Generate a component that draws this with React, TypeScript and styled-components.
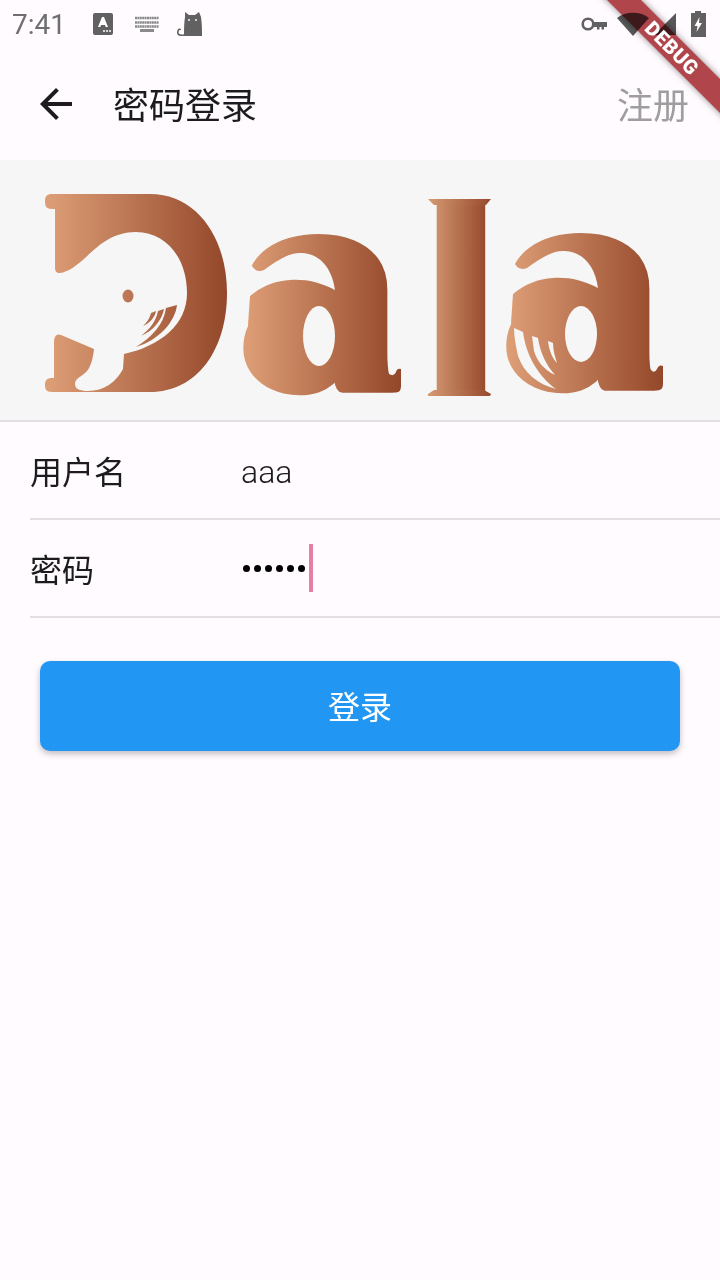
import { createGlobalStyle, styled } from "styled-components";

const GlobalStyle = createGlobalStyle`
  html, body {
    margin: 0;
    padding: 0;
    background: #fffbff;
  }
  body {
    font-family: "Noto Sans CJK SC", "Roboto", sans-serif;
  }
`;

const ICON = "#616161";
const BAND = "#f5f6f5";

const BACK_ARROW =
  "M20 11H7.83l5.59-5.59L12 4l-8 8 8 8 1.41-1.41L7.83 13H20v-2z";

// whale-shaped D, page coordinates (the svg viewBox starts at the band's top)
const WHALE_D =
  "M52 194 H150 C197 194 227 238 227 293 C227 350 197 392 150 392 H52 C46 392 45 389 45 385 C45 380 47 378 52 378 H54 V342 C54 336 57 333 61 335 L94 349 C93 358 91 368 85 373 C79 378 75 379 75 384 C75 389 80 391 88 391 C104 391 116 382 123 369 L124 354 C160 346 187 325 187 293 C187 258 166 232 136 232 C112 232 98 246 85 258 C76 266 68 272 60 273 C56 273 55 271 55 267 V209 H52 C46 209 45 206 45 201 C45 196 47 194 52 194 Z";
const GILLS = [
  "M166 308 L177 305 C175 322 159 340 136 347 C152 337 164 324 166 308 Z",
  "M158 311 L164 309 C162 320 153 331 141 336 C150 329 156 321 158 311 Z",
  "M151 313 L156 311 C155 317 150 323 143 326 C147 322 150 318 151 313 Z",
];
const A_STRIPES = [
  "M514 328 L523 332 C526 355 538 376 556 389 C537 384 524 373 518 356 C516 347 514 337 514 328 Z",
  "M532 336 L538 338 C540 352 546 365 555 375 C544 370 537 361 534 351 Z",
  "M548 341 L553 343 C553 350 555 357 557 363 C552 358 549 350 548 341 Z",
];
// tiny flared serifs of the l and the feet of the two a's
const L_SERIFS =
  "M428 199 H491 L486 205 H434 Z M434 390 H484 L491 394 Q491 396 489 396 H429 Q427 396 428 394 Z";
const FOOT_1 =
  "M342 392.5 H396 Q401 392.5 401 386 V369 Q397 368 396 372 Q394 377 389 374 L380 360 H340 L334 380 Q336 392.5 342 392.5 Z";
const FOOT_2 =
  "M605 390.5 H657 Q663 390.5 663 384 V366 Q659 364 657 369 Q655 373 652 371 L640 356 H603 L597 376 Q599 390.5 605 390.5 Z";
// fills the bowl up to the logo's heavier shape, then the crescent is cut back out
const A_BOWL = "M250 296 L262 275 H336 V372 H285 L248 325 Z";
const A_APERTURE =
  "M238 222 L322 222 L322 232 C300 232 275 240 254 253 Q248 258 252 266 Q256 273 264 270 C278 260 290 252 302 253 C320 254 332 268 335 290 C320 282 305 279 290 280 C275 281 262 286 250 296 L238 302 Z";

const Page = styled.div`
  position: relative;
  width: 720px;
  height: 1280px;
  overflow: hidden;
  background: #fffbff;
`;

const StatusBar = styled.div`
  height: 48px;
  padding: 0 14px 0 12px;
  display: flex;
  align-items: center;
  justify-content: space-between;
`;

const StatusGroup = styled.div`
  display: flex;
  align-items: center;
`;

const Time = styled.span`
  font-family: "Roboto", sans-serif;
  font-size: 28px;
  color: #6f6f6f;
  width: 81px;
`;

const StatusIcon = styled.svg<{ $gap?: number }>`
  display: block;
  margin-left: ${(p) => p.$gap ?? 0}px;
`;

const AppBar = styled.div`
  height: 112px;
  display: flex;
  align-items: center;
  padding-right: 31px;
`;

const BackButton = styled.div`
  width: 113px;
  padding-left: 32px;
  box-sizing: border-box;
  display: flex;
`;

const Title = styled.div`
  flex: 1;
  font-size: 36px;
  color: #1c1b1f;
  padding-bottom: 2px;
`;

const RegisterLink = styled.div`
  font-size: 36px;
  color: #9e9e9e;
  padding-bottom: 2px;
`;

const LogoBand = styled.div`
  height: 260px;
  background: ${BAND};
  border-bottom: 2px solid #e1dfe1;
`;

const LogoArt = styled.svg`
  display: block;
  width: 720px;
  height: 260px;
`;

const FormRow = styled.div`
  height: 96px;
  margin-left: 30px;
  border-bottom: 2px solid #e1dfe1;
  display: flex;
  align-items: center;
`;

const Label = styled.div`
  width: 211px;
  font-size: 32px;
  color: #1c1b1f;
`;

const Value = styled.div`
  font-family: "Roboto", sans-serif;
  font-weight: 300;
  font-size: 32px;
  color: #1c1b1f;
  padding-top: 4px;
`;

const Dots = styled.div`
  display: flex;
  gap: 4px;
  margin-left: 2px;
`;

const Dot = styled.span`
  width: 7px;
  height: 7px;
  border-radius: 50%;
  background: #000;
`;

const Caret = styled.span`
  width: 4px;
  height: 48px;
  margin-left: 4px;
  background: #e87ea5;
`;

const LoginButton = styled.button`
  display: block;
  width: 640px;
  height: 90px;
  margin: 43px 40px 0;
  padding-bottom: 4px;
  border: none;
  border-radius: 10px;
  background: #2196f3;
  color: #fff;
  font-family: inherit;
  font-size: 32px;
  box-shadow: 0 3px 6px rgba(0, 0, 0, 0.25);
`;

const DebugRibbon = styled.div`
  position: absolute;
  left: 572px;
  top: 36px;
  width: 200px;
  height: 24px;
  transform: rotate(45deg);
  background: #b0474c;
  box-shadow: 0 0 7px rgba(0, 0, 0, 0.45);
  mix-blend-mode: multiply;
`;

const DebugLabel = styled.div`
  position: absolute;
  left: 572px;
  top: 36px;
  width: 200px;
  height: 24px;
  line-height: 24px;
  transform: rotate(45deg);
  color: #fff;
  font-family: "Roboto", sans-serif;
  font-weight: 900;
  font-size: 20px;
  letter-spacing: 0.5px;
  text-align: center;
`;

const LogoLetter = styled.text<{ $family: string; $weight: number }>`
  font-family: ${(p) => p.$family}, sans-serif;
  font-weight: ${(p) => p.$weight};
  stroke-linejoin: round;
`;

const HEAVY = '"Roboto"';
const SANS = '"Liberation Sans"';

export default function App() {
  return (
    <Page>
      <GlobalStyle />
      <StatusBar>
        <StatusGroup>
          <Time>7:41</Time>
          <StatusIcon width="20" height="22" viewBox="0 0 20 22">
            <rect width="20" height="22" rx="2" fill={ICON} />
            <path d="M5 14 L9 4 H11 L15 14 H12.7 L12 12 H8 L7.3 14 Z" fill="#fff" />
            <circle cx="11" cy="18" r="1" fill="#fff" />
            <circle cx="14" cy="18" r="1" fill="#fff" />
            <circle cx="17" cy="18" r="1" fill="#fff" />
          </StatusIcon>
          <StatusIcon $gap={22} width="24" height="16" viewBox="0 0 24 16" stroke="#8a8a8a" strokeWidth="3" fill="none">
            <path d="M0 2 H24" strokeDasharray="2 .4" strokeWidth="2.6" />
            <path d="M0 6.5 H24" strokeDasharray="2 .4" strokeWidth="2.6" />
            <path d="M0 10.5 H24" strokeDasharray="2 .4" strokeWidth="2.6" />
            <path d="M5 14.5 H19" />
          </StatusIcon>
          <StatusIcon $gap={18} width="25" height="24" viewBox="0 0 25 24">
            <path
              d="M8 5 L8 0 L12 3 H18 L22 0 L24 5 C25 12 25 18 25 24 H7 C7 18 7 11 8 5 Z"
              fill={ICON}
            />
            <path
              d="M7 23 C2 24 0 22 1 19 C1.5 17 3 17 3.5 18"
              fill="none"
              stroke={ICON}
              strokeWidth="1.6"
            />
            <circle cx="12" cy="8" r="0.9" fill="#fff" />
            <circle cx="19" cy="8" r="0.9" fill="#fff" />
          </StatusIcon>
        </StatusGroup>
        <StatusGroup>
          <StatusIcon width="26" height="14" viewBox="0 0 26 14">
            <circle cx="7" cy="7" r="5.3" fill="none" stroke={ICON} strokeWidth="2.6" />
            <path d="M12 5 H26 V10 H23 V12.5 H20.5 V10 H18.5 V12.5 H16 V10 H12 Z" fill={ICON} />
          </StatusIcon>
          <StatusIcon $gap={10} width="32" height="24" viewBox="0 0 32 24">
            <path d="M0 6 C8 -1 24 -1 32 6 L16 24 Z" fill="#585858" />
          </StatusIcon>
          <StatusIcon $gap={3} width="24" height="24" viewBox="0 0 24 24">
            <path d="M24 1 V23 H2 Z" fill="#585858" />
          </StatusIcon>
          <StatusIcon $gap={15} width="15" height="26" viewBox="0 0 15 26">
            <path
              d="M4 0 H10 V2 H15 V26 H0 V2 H4 Z M8.5 6 L3.5 15 H6.5 L5.5 21 L11 12 H8 Z"
              fill={ICON}
              fillRule="evenodd"
            />
          </StatusIcon>
        </StatusGroup>
      </StatusBar>
      <AppBar>
        <BackButton>
          <svg width="48" height="48" viewBox="0 0 24 24" fill="#1c1b1f">
            <path d={BACK_ARROW} />
          </svg>
        </BackButton>
        <Title>密码登录</Title>
        <RegisterLink>注册</RegisterLink>
      </AppBar>
      <LogoBand>
        <LogoArt viewBox="0 160 720 260">
          <defs>
            <linearGradient id="copperD" gradientUnits="userSpaceOnUse" x1="45" x2="227" y1="0" y2="0">
              <stop offset="0" stopColor="#de9f77" />
              <stop offset="1" stopColor="#94472a" />
            </linearGradient>
            <linearGradient id="copperA1" gradientUnits="userSpaceOnUse" x1="243" x2="400" y1="0" y2="0">
              <stop offset="0" stopColor="#de9f77" />
              <stop offset="1" stopColor="#94472a" />
            </linearGradient>
            <linearGradient id="copperA2" gradientUnits="userSpaceOnUse" x1="506" x2="663" y1="0" y2="0">
              <stop offset="0" stopColor="#de9f77" />
              <stop offset="1" stopColor="#94472a" />
            </linearGradient>
            <linearGradient id="copperInk" gradientUnits="userSpaceOnUse" x1="5" x2="159" y1="0" y2="0">
              <stop offset="0" stopColor="#de9f77" />
              <stop offset="1" stopColor="#94472a" />
            </linearGradient>
            <linearGradient id="copperL" gradientUnits="userSpaceOnUse" x1="428" x2="491" y1="0" y2="0">
              <stop offset="0" stopColor="#d59a73" />
              <stop offset="1" stopColor="#96492c" />
            </linearGradient>
            <linearGradient id="copperStem" gradientUnits="userSpaceOnUse" x1="13" x2="58" y1="0" y2="0">
              <stop offset="0" stopColor="#d59a73" />
              <stop offset="1" stopColor="#96492c" />
            </linearGradient>
          </defs>
          <path d={WHALE_D} fill="url(#copperD)" />
          <ellipse cx="128" cy="296" rx="5.5" ry="6.5" fill="url(#copperD)" />
          {GILLS.map((d) => (
            <path key={d} d={d} fill="url(#copperD)" />
          ))}
          <LogoLetter
            $family={HEAVY}
            $weight={900}
            transform="translate(238,391) scale(1.02,0.97)"
            fontSize="298"
            fill="url(#copperInk)"
            stroke="url(#copperInk)"
            strokeWidth="3"
          >
            a
          </LogoLetter>
          <path d={FOOT_1} fill="url(#copperA1)" />
          <path d={A_BOWL} fill="url(#copperA1)" />
          <path d={A_APERTURE} fill={BAND} />
          <ellipse cx="319" cy="336" rx="16" ry="30" fill={BAND} />
          <LogoLetter
            $family={SANS}
            $weight={700}
            transform="translate(412,396) scale(1.3,1)"
            fontSize="272"
            fill="url(#copperStem)"
          >
            l
          </LogoLetter>
          <path d={L_SERIFS} fill="url(#copperL)" />
          <LogoLetter
            $family={HEAVY}
            $weight={900}
            transform="translate(501,389) scale(1.02,0.97)"
            fontSize="296"
            fill="url(#copperInk)"
            stroke="url(#copperInk)"
            strokeWidth="3"
          >
            a
          </LogoLetter>
          <path d={FOOT_2} fill="url(#copperA2)" />
          <path d={A_BOWL} fill="url(#copperA1)" transform="translate(263,-2)" />
          <path d={A_APERTURE} fill={BAND} transform="translate(263,-2)" />
          <ellipse cx="581" cy="334" rx="16" ry="28" fill={BAND} />
          {A_STRIPES.map((d) => (
            <path key={d} d={d} fill={BAND} />
          ))}
        </LogoArt>
      </LogoBand>
      <FormRow>
        <Label>用户名</Label>
        <Value>aaa</Value>
      </FormRow>
      <FormRow>
        <Label>密码</Label>
        <Dots>
          {[0, 1, 2, 3, 4, 5].map((i) => (
            <Dot key={i} />
          ))}
        </Dots>
        <Caret />
      </FormRow>
      <LoginButton>登录</LoginButton>
      <DebugRibbon />
      <DebugLabel>DEBUG</DebugLabel>
    </Page>
  );
}
